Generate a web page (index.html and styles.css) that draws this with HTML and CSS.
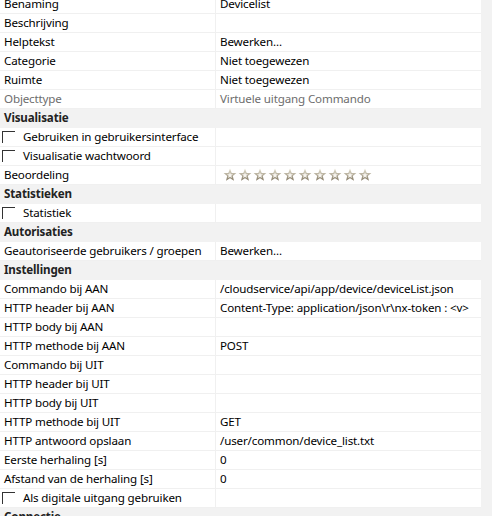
FILE: index.html
```html
<!DOCTYPE html>
<html>
<head>
<meta charset="utf-8">
<link rel="stylesheet" href="styles.css">
</head>
<body>
<div class="grid">
  <div class="row"><div class="label">Benaming</div><div class="value">Devicelist</div></div>
  <div class="row"><div class="label">Beschrijving</div><div class="value"></div></div>
  <div class="row"><div class="label">Helptekst</div><div class="value">Bewerken...</div></div>
  <div class="row"><div class="label">Categorie</div><div class="value">Niet toegewezen</div></div>
  <div class="row"><div class="label">Ruimte</div><div class="value">Niet toegewezen</div></div>
  <div class="row muted"><div class="label">Objecttype</div><div class="value">Virtuele uitgang Commando</div></div>
  <div class="section">Visualisatie</div>
  <div class="row"><div class="label"><span class="check"></span>Gebruiken in gebruikersinterface</div><div class="value"></div></div>
  <div class="row"><div class="label"><span class="check"></span>Visualisatie wachtwoord</div><div class="value"></div></div>
  <div class="row"><div class="label">Beoordeling</div><div class="value stars">
    <svg class="star" viewBox="0 0 14 14"><use href="#star"/></svg><svg class="star" viewBox="0 0 14 14"><use href="#star"/></svg><svg class="star" viewBox="0 0 14 14"><use href="#star"/></svg><svg class="star" viewBox="0 0 14 14"><use href="#star"/></svg><svg class="star" viewBox="0 0 14 14"><use href="#star"/></svg><svg class="star" viewBox="0 0 14 14"><use href="#star"/></svg><svg class="star" viewBox="0 0 14 14"><use href="#star"/></svg><svg class="star" viewBox="0 0 14 14"><use href="#star"/></svg><svg class="star" viewBox="0 0 14 14"><use href="#star"/></svg><svg class="star" viewBox="0 0 14 14"><use href="#star"/></svg>
  </div></div>
  <div class="section">Statistieken</div>
  <div class="row"><div class="label"><span class="check"></span>Statistiek</div><div class="value"></div></div>
  <div class="section">Autorisaties</div>
  <div class="row"><div class="label">Geautoriseerde gebruikers / groepen</div><div class="value">Bewerken...</div></div>
  <div class="section">Instellingen</div>
  <div class="row"><div class="label">Commando bij AAN</div><div class="value">/cloudservice/api/app/device/deviceList.json</div></div>
  <div class="row"><div class="label">HTTP header bij AAN</div><div class="value">Content-Type: application/json\r\nx-token : &lt;v&gt;</div></div>
  <div class="row"><div class="label">HTTP body bij AAN</div><div class="value"></div></div>
  <div class="row"><div class="label">HTTP methode bij AAN</div><div class="value">POST</div></div>
  <div class="row"><div class="label">Commando bij UIT</div><div class="value"></div></div>
  <div class="row"><div class="label">HTTP header bij UIT</div><div class="value"></div></div>
  <div class="row"><div class="label">HTTP body bij UIT</div><div class="value"></div></div>
  <div class="row"><div class="label">HTTP methode bij UIT</div><div class="value">GET</div></div>
  <div class="row"><div class="label">HTTP antwoord opslaan</div><div class="value">/user/common/device_list.txt</div></div>
  <div class="row"><div class="label">Eerste herhaling [s]</div><div class="value">0</div></div>
  <div class="row"><div class="label">Afstand van de herhaling [s]</div><div class="value">0</div></div>
  <div class="row"><div class="label"><span class="check"></span>Als digitale uitgang gebruiken</div><div class="value"></div></div>
  <div class="section">Connectie</div>
</div>
<svg width="0" height="0" class="defs">
  <defs>
    <linearGradient id="sg" x1="0" y1="0" x2="0" y2="1">
      <stop offset="0" stop-color="#e4e0cf"/>
      <stop offset="1" stop-color="#857a66"/>
    </linearGradient>
    <g id="star">
      <path d="M7 0.6 L8.7 4.9 L13.4 5.1 L9.8 8.1 L11 12.8 L7 10.2 L3 12.8 L4.2 8.1 L0.6 5.1 L5.3 4.9 Z" fill="url(#sg)"/>
      <path d="M7 4.2 L7.8 6.2 L10 6.3 L8.3 7.7 L8.9 9.9 L7 8.7 L5.1 9.9 L5.7 7.7 L4 6.3 L6.2 6.2 Z" fill="#f7f5ef"/>
    </g>
  </defs>
</svg>
</body>
</html>
```
FILE: styles.css
```css
html, body {
  margin: 0;
  padding: 0;
  background: #f2f2f2;
  overflow: hidden;
}
body {
  font-family: "Noto Sans", "Open Sans", sans-serif;
  font-size: 11.6px;
  letter-spacing: -0.15px;
  color: #000;
}
.grid {
  width: 481px;
  margin-top: -5px;
}
.row {
  display: flex;
  height: 18px;
  border-bottom: 1px solid #f0f0f0;
  background: #fff;
}
.label {
  width: 211px;
  flex: none;
  padding-left: 4px;
  border-right: 1px solid #f0f0f0;
  display: flex;
  align-items: center;
  white-space: nowrap;
  overflow: hidden;
  line-height: 18px;
}
.value {
  flex: 1;
  min-width: 0;
  padding-left: 4px;
  display: flex;
  align-items: center;
  white-space: nowrap;
  overflow: hidden;
  line-height: 18px;
}
.muted .label, .muted .value {
  color: #6d6d6d;
}
.section {
  height: 19px;
  line-height: 18px;
  padding-left: 4px;
  font-weight: bold;
  color: #222;
  background: #f2f2f2;
}
.check {
  width: 13px;
  height: 12px;
  border-top: 1px solid #333;
  border-left: 1px solid #333;
  box-sizing: border-box;
  margin-left: -2px;
  margin-right: 8px;
  flex: none;
}
.stars {
  gap: 1px;
  padding-left: 7px;
}
.star {
  width: 14px;
  height: 14px;
  flex: none;
}
.defs {
  position: absolute;
}
```
